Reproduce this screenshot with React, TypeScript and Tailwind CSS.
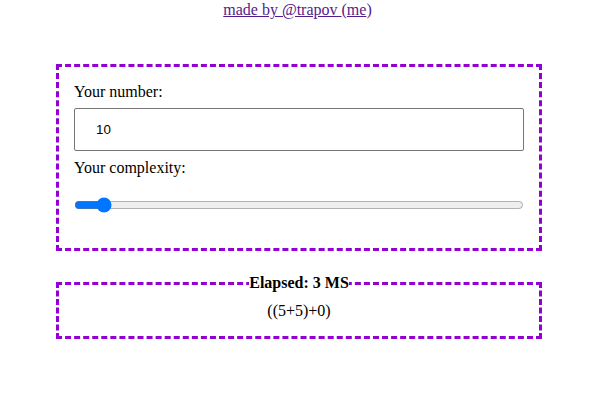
import { useState } from 'react';

export default function App() {
  const [num, setNum] = useState('10');
  const [complexity, setComplexity] = useState(5);

  return (
    <div className="min-h-[406px] bg-white text-black text-[16px] leading-[18px]" style={{ fontFamily: '"Liberation Serif", "Times New Roman", serif' }}>
      {/* credit line */}
      <p className="pt-[1px] pl-[2px] text-center text-[#551a8b]">
        <a href="#" className="underline">made by @trapov </a>(<a href="#" className="underline">me</a>)
      </p>

      {/* input panel */}
      <div className="ml-[56px] mt-[45px] w-[486px] border-[3px] border-dashed border-[#9400d3] px-[15px] pt-[16px] pb-[35px]">
        <label className="block">Your number:</label>
        <input
          type="text"
          value={num}
          onChange={e => setNum(e.target.value)}
          className="mt-[7px] block h-[43px] w-full rounded-[2px] border border-[#767676] px-[21px] text-[13.33px] outline-none"
          style={{ fontFamily: '"Liberation Sans", Arial, sans-serif' }}
        />
        <label className="mt-[8px] block">Your complexity:</label>
        <input
          type="range"
          min={0}
          max={100}
          value={complexity}
          onChange={e => setComplexity(Number(e.target.value))}
          className="mt-[20px] block h-[16px] w-full"
        />
      </div>

      {/* result */}
      <fieldset className="ml-[56px] mt-[23px] w-[486px] border-[3px] border-dashed border-[#9400d3] pb-[16px] text-center">
        <legend className="mx-auto font-bold">Elapsed: 3 MS</legend>
        <div className="mt-[10px]">((5+5)+0)</div>
      </fieldset>
    </div>
  );
}
